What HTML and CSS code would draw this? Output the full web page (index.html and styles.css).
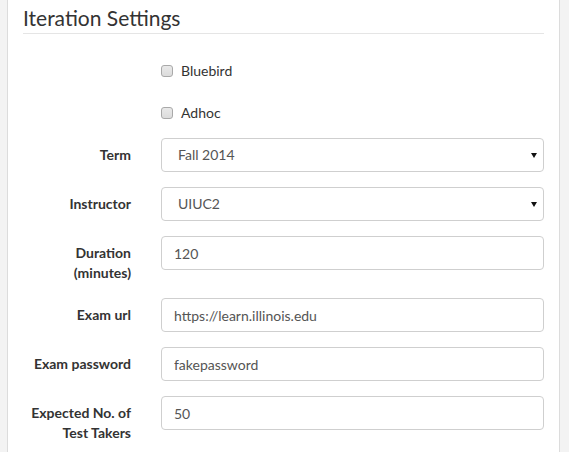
FILE: index.html
```html
<!DOCTYPE html>
<html>
<head>
<meta charset="utf-8">
<link rel="stylesheet" href="styles.css">
</head>
<body>
<div class="panel">
  <form class="form">
    <div class="legend">Iteration Settings</div>
    <div class="group">
      <div class="label-col"></div>
      <div class="field-col">
        <label class="check"><input type="checkbox"> Bluebird</label>
      </div>
    </div>
    <div class="group">
      <div class="label-col"></div>
      <div class="field-col">
        <label class="check"><input type="checkbox"> Adhoc</label>
      </div>
    </div>
    <div class="group">
      <label class="label-col lbl">Term</label>
      <div class="field-col">
        <div class="select-wrap">
          <select class="control select"><option>Fall 2014</option></select>
          <span class="arrow"></span>
        </div>
      </div>
    </div>
    <div class="group">
      <label class="label-col lbl">Instructor</label>
      <div class="field-col">
        <div class="select-wrap">
          <select class="control select"><option>UIUC2</option></select>
          <span class="arrow"></span>
        </div>
      </div>
    </div>
    <div class="group">
      <label class="label-col lbl">Duration (minutes)</label>
      <div class="field-col"><input class="control" type="text" value="120"></div>
    </div>
    <div class="group">
      <label class="label-col lbl">Exam url</label>
      <div class="field-col"><input class="control" type="text" value="https://learn.illinois.edu"></div>
    </div>
    <div class="group">
      <label class="label-col lbl">Exam password</label>
      <div class="field-col"><input class="control" type="text" value="fakepassword"></div>
    </div>
    <div class="group">
      <label class="label-col lbl">Expected No. of Test Takers</label>
      <div class="field-col"><input class="control" type="text" value="50"></div>
    </div>
  </form>
</div>
</body>
</html>
```
FILE: styles.css
```css
html, body {
  margin: 0;
  padding: 0;
  background: #f3f3f3;
  font-family: Lato, "Open Sans", "Liberation Sans", sans-serif;
  font-size: 14px;
  line-height: 20px;
  color: #333;
}
.panel {
  margin-left: 7px;
  width: 551px;
  height: 460px;
  background: #fff;
  border-left: 1px solid #dcdcdc;
  border-right: 1px solid #dcdcdc;
  padding: 2px 0 0 0;
  box-sizing: content-box;
  overflow: hidden;
}
.form {
  margin: 0;
  padding: 0 15px;
}
.legend {
  font-size: 21px;
  line-height: 31px;
  color: #333;
  border-bottom: 1px solid #e5e5e5;
  margin-bottom: 20px;
}
.group {
  display: flex;
  margin: 0 -15px 15px -15px;
}
.label-col {
  width: 138px;
  flex: none;
  box-sizing: border-box;
  padding: 0 15px;
}
.lbl {
  padding-top: 7px;
  text-align: right;
  font-weight: bold;
  color: #333;
}
.field-col {
  flex: 1;
  padding: 0 15px;
  min-width: 0;
}
.check {
  display: block;
  padding-top: 7px;
  min-height: 20px;
  padding-left: 20px;
  position: relative;
  color: #333;
}
.check input {
  -webkit-appearance: none;
  appearance: none;
  position: absolute;
  left: 0;
  top: 11px;
  margin: 0;
  width: 12px;
  height: 12px;
  box-sizing: border-box;
  border: 1px solid #a9a9a9;
  border-radius: 3px;
  background: linear-gradient(#e9e9e9, #dcdcdc);
}
.control {
  display: block;
  width: 100%;
  height: 34px;
  box-sizing: border-box;
  padding: 6px 12px;
  font-family: inherit;
  font-size: 14px;
  line-height: 20px;
  color: #555;
  background: #fff;
  border: 1px solid #cfcfcf;
  border-radius: 4px;
  margin: 0;
}
.select-wrap {
  position: relative;
}
.select {
  -webkit-appearance: none;
  appearance: none;
  padding-left: 16px;
}
.arrow {
  position: absolute;
  right: 7px;
  top: 15px;
  width: 0;
  height: 0;
  border-left: 3px solid transparent;
  border-right: 3px solid transparent;
  border-top: 5px solid #111;
  pointer-events: none;
}
```
